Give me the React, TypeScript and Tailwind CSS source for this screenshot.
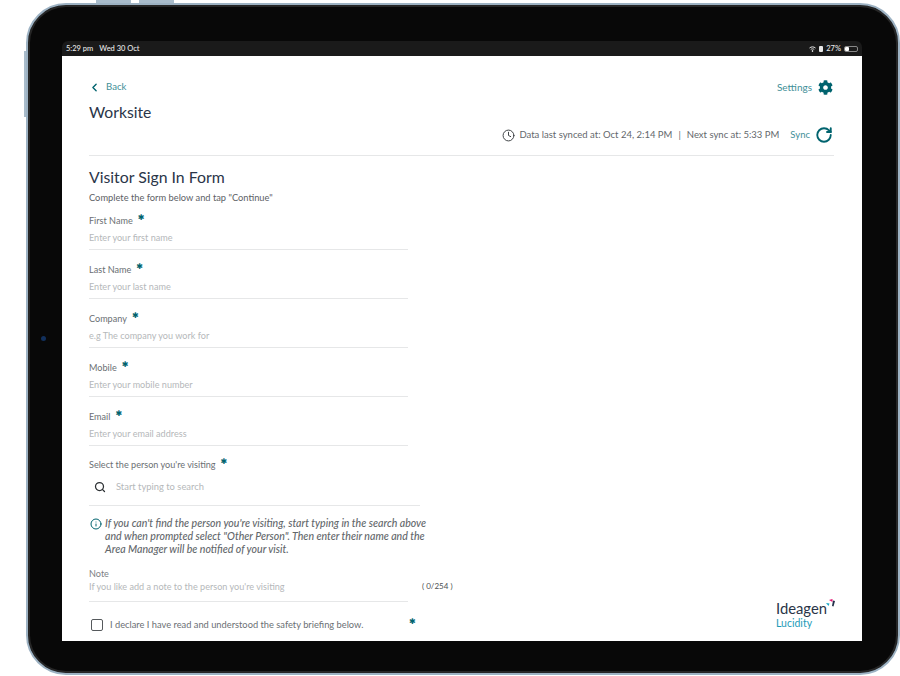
import React from 'react';
import { ChevronLeft, Clock, Info, RotateCw, Search } from 'lucide-react';
import { FaCog } from 'react-icons/fa';

const font = { fontFamily: 'Lato, "Open Sans", sans-serif' };

const Star = () => (
    <span className="text-[8px] leading-none text-[#00636e] relative -top-[3px]" style={{ fontFamily: '"DejaVu Sans", sans-serif' }}>✱</span>
);

const Field: React.FC<{ label: string; placeholder: string }> = ({ label, placeholder }) => (
    <div className="w-[319px] h-[49px] flex flex-col">
        <div className="h-[18px] pt-[1px] flex items-center gap-[5px] text-[9.100px] text-[#6b6f73]">
            {label} <Star />
        </div>
        <div className="h-[18px] flex items-center text-[9.100px] text-[#b5b8ba]">{placeholder}</div>
        <div className="h-[3px] border-b border-[#e6e7e8]" />
    </div>
);

const fields = [
    ['First Name', 'Enter your first name'],
    ['Last Name', 'Enter your last name'],
    ['Company', 'e.g The company you work for'],
    ['Mobile', 'Enter your mobile number'],
    ['Email', 'Enter your email address'],
];

const App: React.FC = () => {
    return (
        <div className="w-[900px] h-[676px] bg-white overflow-hidden pt-[3px] pl-[26px]" style={font}>
            <div className="relative w-[874px] h-[672px] rounded-[40px] bg-[#080808] border-[2px] border-[#9db2c3] pt-[36px] pl-[34px] shadow-[inset_0_0_0_2px_#262626]">
                {/* hardware buttons */}
                <div className="absolute -top-[5px] left-[68px] w-[35px] h-[3px] bg-[#a9bccb]" />
                <div className="absolute -top-[5px] left-[111px] w-[35px] h-[3px] bg-[#a9bccb]" />
                <div className="absolute top-[46px] -left-[4px] w-[2px] h-[66px] bg-[#a9bccb]" />
                <div className="absolute top-[331px] left-[13px] w-[5px] h-[5px] rounded-full bg-[#12305c]" />

                <div className="w-[800px] h-[600px] flex flex-col">
                    {/* status bar */}
                    <div className="h-[15px] bg-[#1a1a1a] rounded-t-[6px] flex items-center justify-between px-[4px] text-[7.500px] font-medium text-[#e8e8e8]">
                        <div className="flex gap-[6px]">
                            <span>5:29 pm</span>
                            <span>Wed 30 Oct</span>
                        </div>
                        <div className="flex items-center gap-[2px]">
                            <svg width="7" height="6" viewBox="0 0 14 12" fill="none" stroke="#e8e8e8" strokeWidth="2">
                                <path d="M1 4c3.500-3 8.500-3 12 0M3.500 7c2-1.700 5-1.700 7 0" />
                                <circle cx="7" cy="10" r="1" fill="#e8e8e8" />
                            </svg>
                            <span className="w-[4px] h-[6px] bg-[#e8e8e8] rounded-[1px] ml-[1px]" />
                            <span className="ml-[1px]">27%</span>
                            <span className="w-[14px] h-[6px] border border-[#888] rounded-[2px] ml-[1px] flex">
                                <span className="w-[4px] h-full bg-white rounded-[1px]" />
                            </span>
                        </div>
                    </div>

                    {/* screen */}
                    <div className="relative h-[585px] bg-white px-[27px] overflow-hidden">
                        <div className="h-[63px] flex flex-col">
                            <div className="h-[14px] mt-[24px] flex items-center justify-between pr-[2px]">
                                <div className="flex items-center gap-[4px] text-[9.600px] text-[#3f8f98]">
                                    <ChevronLeft size={13} strokeWidth={2.500} className="text-[#00636e] -ml-[1px]" />
                                    <span className="ml-[1px]">Back</span>
                                </div>
                                <div className="flex items-center gap-[6px] text-[10px] text-[#3f8f98]">
                                    Settings
                                    <FaCog size={15} className="text-[#00636e]" />
                                </div>
                            </div>
                            <div className="text-[15.700px] leading-[20px] mt-[8px] text-[#2a3548]">Worksite</div>
                        </div>
                        <div className="h-[37px] w-[745px] border-b border-[#e6e7e8] flex items-start justify-end text-[9.500px] text-[#63676b]">
                            <div className="flex items-center h-[20px] mt-[6px] pr-[1px]">
                                <Clock size={13} strokeWidth={1.800} className="text-[#3c4043] mr-[4px]" />
                                <span>Data last synced at: Oct 24, 2:14 PM</span>
                                <span className="mx-[6px]">|</span>
                                <span>Next sync at: 5:33 PM</span>
                                <span className="ml-[11px] text-[#3f8f98]">Sync</span>
                                <RotateCw size={18} strokeWidth={2.500} className="ml-[5px] text-[#00636e]" />
                            </div>
                        </div>

                        <div className="text-[15.800px] leading-[20px] mt-[11px] text-[#2a3548]">Visitor Sign In Form</div>
                        <div className="text-[9.300px] leading-[14px] mt-[4px] text-[#5d6165]">Complete the form below and tap "Continue"</div>
                        <div className="mt-[6px]">
                            {fields.map(([label, placeholder]) => (
                                <Field key={label} label={label} placeholder={placeholder} />
                            ))}
                        </div>

                        {/* visiting search */}
                        <div className="w-[331px] h-[51px] -mt-[1px] border-b border-[#e6e7e8]">
                            <div className="h-[18px] pt-[1px] flex items-center gap-[5px] text-[9.100px] text-[#6b6f73]">
                                Select the person you're visiting <Star />
                            </div>
                            <div className="h-[28px] flex items-center text-[9.400px] text-[#b5b8ba]">
                                <Search size={12} strokeWidth={2.500} className="text-[#2c3033] ml-[5px] mr-[10px]" />
                                Start typing to search
                            </div>
                        </div>

                        <div className="w-[345px] flex gap-[3px] mt-[11px] text-[10.550px] leading-[13px] italic font-medium text-[#63676b]">
                            <Info size={12} strokeWidth={2} className="text-[#00636e] shrink-0 ml-[1px] mt-[1px]" />
                            <p>
                                If you can't find the person you're visiting, start typing in the search above and when prompted select "Other Person". Then enter their name and the Area Manager will be notified of your visit.
                            </p>
                        </div>

                        {/* note */}
                        <div className="flex items-start mt-[11px]">
                            <div className="w-[319px] h-[35px] border-b border-[#e6e7e8] text-[9.100px]">
                                <div className="h-[13px] leading-[13px] text-[#7c8084]">Note</div>
                                <div className="h-[13px] leading-[13px] text-[#b5b8ba]">If you like add a note to the person you're visiting</div>
                            </div>
                            <div className="ml-[14px] mt-[13px] h-[13px] leading-[13px] text-[8px] text-[#4c5053]">( 0/254 )</div>
                        </div>

                        <div className="flex items-center h-[14px] mt-[16px] text-[9.300px] text-[#6b6f73]">
                            <span className="w-[12px] h-[12px] ml-[2px] mr-[7px] border border-[#55595c] rounded-[2px]" />
                            <span className="w-[299px]">I declare I have read and understood the safety briefing below.</span>
                            <Star />
                        </div>

                        {/* logo */}
                        <div className="absolute right-[26px] bottom-[13px] w-[60px] leading-none">
                            <div className="flex items-start text-[#2a3548] text-[14.800px] h-[17px]">
                                Ideagen
                                <svg width="9" height="10" viewBox="0 0 9 10" className="-ml-[1px] -mt-[2px]">
                                    <path d="M3 1l3.500-1 0 3z" fill="#e0126f" />
                                    <path d="M7 1.500l2 .5-1.500 5.500-1.500-.5z" fill="#23304a" />
                                    <path d="M0 4l3.500.5-1 2.500z" fill="#17a5c4" />
                                </svg>
                            </div>
                            <div className="text-[10.500px] text-[#1d9cb8]">Lucidity</div>
                        </div>
                    </div>
                </div>
            </div>
        </div>
    );
};

export default App;
